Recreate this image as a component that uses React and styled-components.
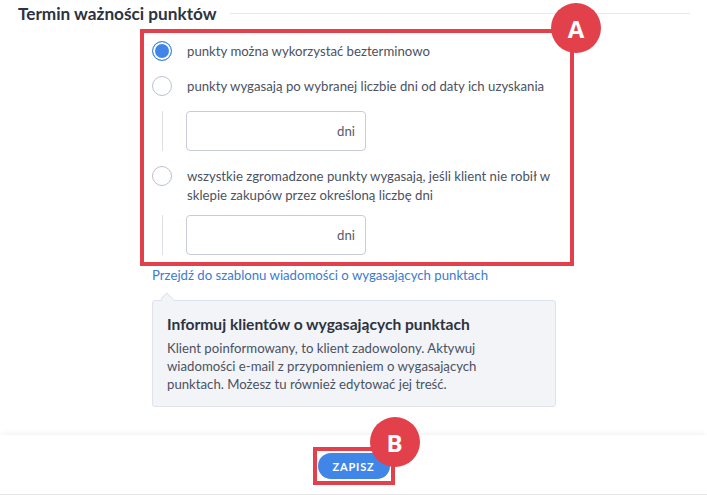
import React from 'react'
import styled, { createGlobalStyle } from 'styled-components'

const GlobalStyle = createGlobalStyle`
    body {
        margin: 0;
        background: #ffffff;
        font-family: Lato, "Noto Sans", sans-serif;
    }
`

const options = [
    { id: 1, label: 'punkty można wykorzystać bezterminowo', checked: true },
    { id: 2, label: 'punkty wygasają po wybranej liczbie dni od daty ich uzyskania', input: true },
    {
        id: 3,
        label: 'wszystkie zgromadzone punkty wygasają, jeśli klient nie robił w sklepie zakupów przez określoną liczbę dni',
        input: true,
        tight: true,
    },
]

function App() {
    return (
        <Page>
            <GlobalStyle />
            <Main>
                <SectionHeader>
                    <Title>Termin ważności punktów</Title>
                    <Rule />
                </SectionHeader>

                <Content>
                    <Highlight>
                        <Badge>A</Badge>
                        <Options>
                            {options.map((o) => (
                                <Option key={o.id} $tight={o.tight}>
                                    <Row>
                                        <Radio $checked={o.checked} />
                                        <Label>{o.label}</Label>
                                    </Row>
                                    {o.input && (
                                        <SubField>
                                            <DaysInput>
                                                <span>dni</span>
                                            </DaysInput>
                                        </SubField>
                                    )}
                                </Option>
                            ))}
                        </Options>
                    </Highlight>

                    <Link href="#">Przejdź do szablonu wiadomości o wygasających punktach</Link>

                    <InfoBox>
                        <InfoTitle>Informuj klientów o wygasających punktach</InfoTitle>
                        <InfoText>
                            Klient poinformowany, to klient zadowolony. Aktywuj
                            <br />
                            wiadomości e-mail z przypomnieniem o wygasających
                            <br />
                            punktach. Możesz tu również edytować jej treść.
                        </InfoText>
                    </InfoBox>
                </Content>
            </Main>

            <Footer>
                <ButtonFrame>
                    <Badge>B</Badge>
                    <SaveButton>Zapisz</SaveButton>
                </ButtonFrame>
            </Footer>
        </Page>
    )
}

export default App

const Page = styled.div`
    width: 707px;
    height: 495px;
    display: flex;
    flex-direction: column;
    overflow: hidden;
`

const Main = styled.div`
    height: 435px;
    padding: 2px 17px 0 18px;
    box-sizing: border-box;
`

const SectionHeader = styled.div`
    display: flex;
    align-items: center;
    gap: 13px;
    height: 22px;
`

const Title = styled.h2`
    margin: 0;
    font-size: 17.2px;
    font-weight: 700;
    color: #2d3340;
    white-space: nowrap;
`

const Rule = styled.div`
    flex: 1;
    height: 1px;
    background: #e8e8ea;
`

const Content = styled.div`
    margin-left: 122px;
    margin-top: 5px;
    display: flex;
    flex-direction: column;
    align-items: flex-start;
`

const Highlight = styled.div`
    position: relative;
    width: 434px;
    box-sizing: border-box;
    border: 4px solid #e2404a;
    padding: 8px 8px 7px 8px;
`

const Badge = styled.div`
    position: absolute;
    top: -30px;
    right: -31px;
    width: 50px;
    height: 50px;
    border-radius: 50%;
    background: #e2404a;
    color: #ffffff;
    font-family: "Open Sans", sans-serif;
    font-weight: 700;
    font-size: 24px;
    display: flex;
    align-items: center;
    justify-content: center;
    z-index: 2;
`

const Options = styled.div`
    display: flex;
    flex-direction: column;
    gap: 15px;
`

const Option = styled.div`
    display: flex;
    flex-direction: column;
    gap: ${(p) => (p.$tight ? '10px' : '15px')};
`

const Row = styled.label`
    display: flex;
    align-items: flex-start;
    gap: 15px;
`

const Radio = styled.span`
    flex: none;
    width: 20px;
    height: 20px;
    box-sizing: border-box;
    border-radius: 50%;
    border: 1px solid ${(p) => (p.$checked ? '#3f86e8' : '#b9c1d3')};
    background: ${(p) => (p.$checked ? '#3f86e8' : '#ffffff')};
    box-shadow: ${(p) => (p.$checked ? 'inset 0 0 0 2px #ffffff' : 'none')};
`

const Label = styled.span`
    font-size: 13.2px;
    line-height: 19px;
    padding-top: 1px;
    color: #4b5262;
    padding-right: 8px;
`

const SubField = styled.div`
    margin-left: 10px;
    padding-left: 23px;
    border-left: 1px solid #dde0e7;
`

const DaysInput = styled.div`
    width: 180px;
    height: 40px;
    box-sizing: border-box;
    border: 1px solid #c7ccd8;
    border-radius: 4px;
    display: flex;
    align-items: center;
    justify-content: flex-end;
    padding-right: 10px;
    font-size: 13.2px;
    color: #555c69;
`

const Link = styled.a`
    margin: 0 0 0 12px;
    font-size: 13.2px;
    line-height: 18px;
    color: #3b7bd0;
    text-decoration: none;
`

const InfoBox = styled.div`
    position: relative;
    margin: 16px 0 0 12px;
    width: 404px;
    box-sizing: border-box;
    padding: 12px 14px 13px;
    background: #f2f4f8;
    border: 1px solid #dde2ed;
    border-radius: 3px;

    &::before {
        content: '';
        position: absolute;
        top: -7px;
        left: 9px;
        width: 10px;
        height: 10px;
        background: #f2f4f8;
        border-left: 1px solid #dde2ed;
        border-top: 1px solid #dde2ed;
        transform: rotate(45deg) scaleY(0.8);
    }
`

const InfoTitle = styled.div`
    font-size: 15.6px;
    font-weight: 700;
    color: #2d3340;
    line-height: 22px;
    margin-bottom: 4px;
`

const InfoText = styled.p`
    margin: 0;
    font-size: 13.2px;
    line-height: 18px;
    color: #4b5262;
`

const Footer = styled.div`
    height: 59px;
    display: flex;
    align-items: center;
    justify-content: center;
    border-bottom: 1px solid #e4e6ea;
    box-shadow: 0 -4px 5px -2px rgba(0, 0, 0, 0.05);
`

const ButtonFrame = styled.div`
    position: relative;
    border: 4px solid #e2404a;
    padding: 2px 1px;
    margin-top: 3px;

    ${Badge} {
        top: -34px;
        right: -29px;
    }
`

const SaveButton = styled.button`
    display: block;
    width: 72px;
    height: 26px;
    border: none;
    border-radius: 13px;
    background: #3f86e8;
    color: #ffffff;
    font-family: Lato, sans-serif;
    font-weight: 700;
    font-size: 11px;
    letter-spacing: 0.8px;
    text-transform: uppercase;
`
